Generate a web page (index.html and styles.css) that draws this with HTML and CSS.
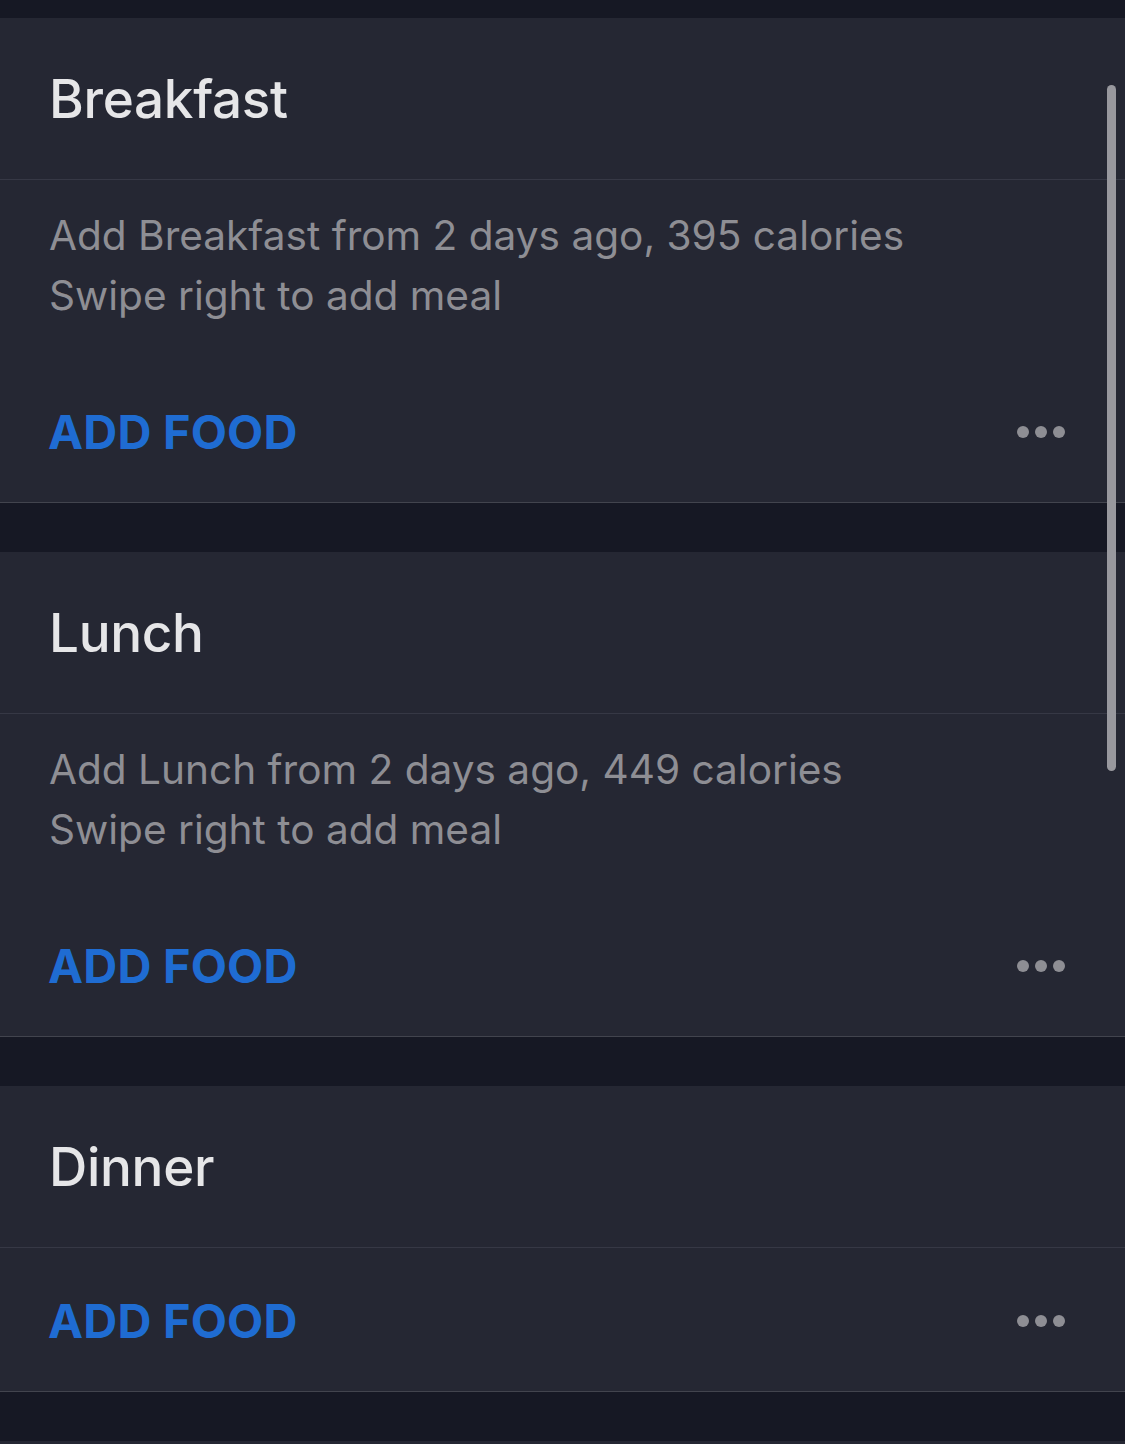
FILE: index.html
```html
<!DOCTYPE html>
<html>
<head>
<meta charset="utf-8">
<link rel="stylesheet" href="styles.css">
</head>
<body>
<div class="list">
  <section class="card">
    <div class="card-head"><h2 class="title">Breakfast</h2></div>
    <div class="desc">
      <p>Add Breakfast from 2 days ago, 395 calories</p>
      <p>Swipe right to add meal</p>
    </div>
    <div class="actions">
      <span class="add">ADD FOOD</span>
      <span class="more"><i></i><i></i><i></i></span>
    </div>
  </section>
  <section class="card">
    <div class="card-head"><h2 class="title">Lunch</h2></div>
    <div class="desc">
      <p>Add Lunch from 2 days ago, 449 calories</p>
      <p>Swipe right to add meal</p>
    </div>
    <div class="actions">
      <span class="add">ADD FOOD</span>
      <span class="more"><i></i><i></i><i></i></span>
    </div>
  </section>
  <section class="card">
    <div class="card-head"><h2 class="title">Dinner</h2></div>
    <div class="actions">
      <span class="add">ADD FOOD</span>
      <span class="more"><i></i><i></i><i></i></span>
    </div>
  </section>
  <section class="card card-tail"></section>
</div>
<div class="scrollbar"></div>
</body>
</html>
```
FILE: styles.css
```css
html, body {
  margin: 0;
  padding: 0;
  background: #161824;
  height: 1444px;
  overflow: hidden;
  font-family: Inter, "Noto Sans", "Liberation Sans", sans-serif;
}
.list {
  padding-top: 18px;
  display: flex;
  flex-direction: column;
  gap: 49px;
}
.card {
  background: #252733;
  border-bottom: 1px solid #42444e;
}
.card-tail {
  height: 40px;
  border-bottom: none;
}
.card-head {
  height: 161px;
  display: flex;
  align-items: center;
  padding-left: 49px;
  border-bottom: 1px solid #363845;
}
.title {
  margin: 0;
  font-size: 53px;
  font-weight: 500;
  color: #e6e6e8;
  letter-spacing: -0.3px;
}
.desc {
  padding: 26px 49px 33px;
}
.desc p {
  margin: 0;
  font-size: 40.6px;
  line-height: 60px;
  color: #8e8e94;
  font-weight: 400;
}
.actions {
  height: 143px;
  display: flex;
  align-items: center;
  justify-content: space-between;
  padding: 2px 60px 0 48px;
  box-sizing: border-box;
}
.add {
  font-size: 47px;
  font-weight: 700;
  color: #1f6cd2;
  letter-spacing: 0.2px;
}
.more {
  display: flex;
  gap: 6px;
}
.more i {
  width: 12px;
  height: 12px;
  border-radius: 50%;
  background: #8e8e94;
}
.scrollbar {
  position: absolute;
  left: 1107px;
  top: 85px;
  width: 9px;
  height: 686px;
  border-radius: 5px;
  background: #98989e;
}
```
